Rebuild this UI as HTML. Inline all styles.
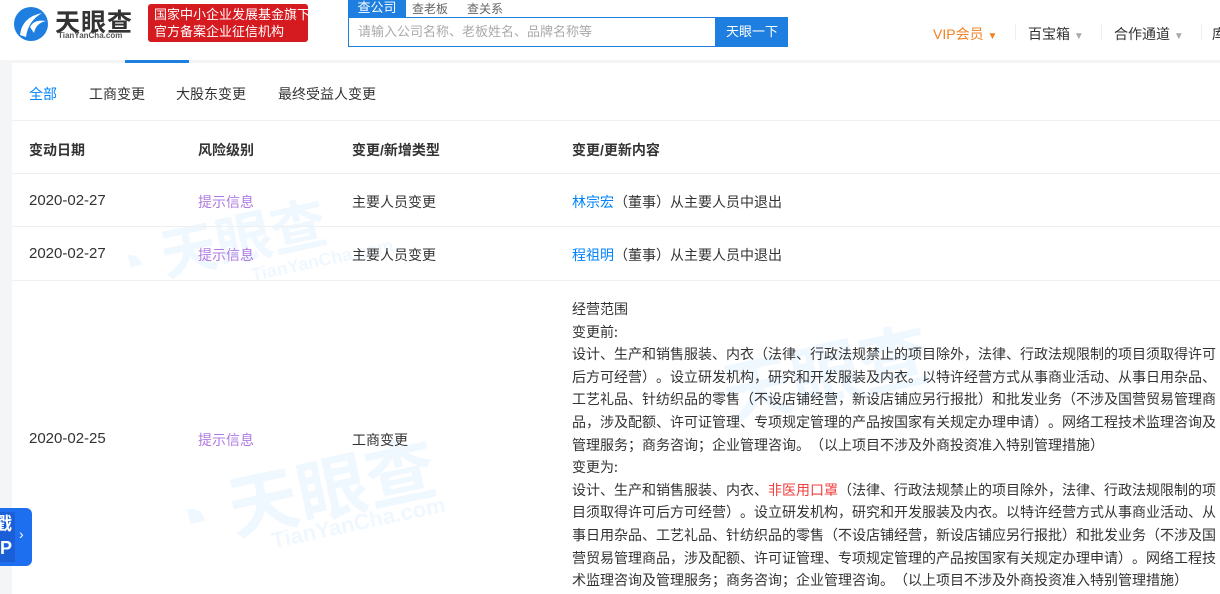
<!DOCTYPE html>
<html><head><meta charset="utf-8"><style>
*{margin:0;padding:0;box-sizing:border-box}
body{width:1220px;height:594px;overflow:hidden;background:#f4f5f7;font-family:"Liberation Sans","Noto Sans CJK SC",sans-serif;color:#333;font-size:14px;position:relative;text-spacing-trim:space-all}
.hdr{position:absolute;left:0;top:0;width:1220px;height:60px;background:#fff}
.main{position:absolute;left:12px;top:63px;width:1208px;height:531px;background:#fff}
.abs{position:absolute;white-space:nowrap}
.line{position:absolute;left:12px;width:1208px;height:1px;background:#eef0f2}
.wm{position:absolute;color:#0084ff;opacity:.06;font-weight:bold;white-space:nowrap;transform:rotate(-12deg)}
.blue{color:#0084ff}
.purple{color:#b07be0}
</style></head><body>
<div class="hdr">
 <svg class="abs" style="left:12px;top:5px" width="38" height="38" viewBox="0 0 38 38"><circle cx="19" cy="19" r="17" fill="#1e7fe0"/><path d="M8 30 Q10 12 30 8 Q16 16 14 32Z" fill="#fff"/><path d="M18 22 Q22 14 34 16 Q24 18 22 28Z" fill="#fff"/></svg>
 <div class="abs" style="left:55px;top:3px;font-size:25px;font-weight:bold;color:#333;letter-spacing:1px">天眼查</div>
 <div class="abs" style="left:58px;top:31px;font-size:8px;font-weight:bold;color:#555">TianYanCha.com</div>
 <div class="abs" style="left:148px;top:4px;width:160px;height:38px;background:#d51a20;border-radius:3px;color:#fff;font-size:13px;line-height:17px;padding:2px 6px">国家中小企业发展基金旗下<br>官方备案企业征信机构</div>
 <div class="abs" style="left:348px;top:0;width:58px;height:17px;background:#1e7fe0;color:#fff;font-size:13px;text-align:center;line-height:16px">查公司</div>
 <div class="abs" style="left:412px;top:0;font-size:12px;color:#666">查老板</div>
 <div class="abs" style="left:467px;top:0;font-size:12px;color:#666">查关系</div>
 <div class="abs" style="left:348px;top:17px;width:368px;height:30px;border:1px solid #1e7fe0;color:#aaa;font-size:13px;line-height:28px;padding-left:9px">请输入公司名称、老板姓名、品牌名称等</div>
 <div class="abs" style="left:716px;top:17px;width:72px;height:30px;background:#1e7fe0;color:#fff;font-size:13px;line-height:30px;text-align:center">天眼一下</div>
 <div class="abs" style="left:933px;top:24px;color:#f08226;font-size:14px">VIP会员 <span style="font-size:10px">▼</span></div>
 <div class="abs" style="left:1015px;top:24px;width:1px;height:16px;background:#eee"></div>
 <div class="abs" style="left:1028px;top:24px;color:#333">百宝箱 <span style="font-size:10px;color:#aaa">▼</span></div>
 <div class="abs" style="left:1101px;top:24px;width:1px;height:16px;background:#eee"></div>
 <div class="abs" style="left:1114px;top:24px;color:#333">合作通道 <span style="font-size:10px;color:#aaa">▼</span></div>
 <div class="abs" style="left:1201px;top:24px;width:1px;height:16px;background:#eee"></div>
 <div class="abs" style="left:1212px;top:24px;color:#333">库</div>
</div>
<div class="abs" style="left:125px;top:60px;width:64px;height:3px;background:#1e7fe0"></div>
<div class="main"></div>
<div class="wm" style="left:110px;top:200px;font-size:56px">◔ 天眼查</div>
<div class="wm" style="left:250px;top:250px;font-size:18px">TianYanCha.com</div>
<div class="wm" style="left:165px;top:440px;font-size:70px">◔ 天眼查</div>
<div class="wm" style="left:270px;top:510px;font-size:22px">TianYanCha.com</div>
<div class="wm" style="left:720px;top:320px;font-size:70px">天眼查</div>
<div class="abs blue" style="left:29px;top:84px">全部</div>
<div class="abs" style="left:89px;top:84px">工商变更</div>
<div class="abs" style="left:176px;top:84px">大股东变更</div>
<div class="abs" style="left:278px;top:84px">最终受益人变更</div>
<div class="line" style="top:120px"></div>
<div class="abs" style="left:29px;top:140px;font-weight:bold">变动日期</div>
<div class="abs" style="left:198px;top:140px;font-weight:bold">风险级别</div>
<div class="abs" style="left:352px;top:140px;font-weight:bold">变更/新增类型</div>
<div class="abs" style="left:572px;top:140px;font-weight:bold">变更/更新内容</div>
<div class="line" style="top:173px"></div>
<div class="abs" style="left:29px;top:192px;font-size:15px">2020-02-27</div>
<div class="abs purple" style="left:198px;top:192px">提示信息</div>
<div class="abs" style="left:352px;top:192px">主要人员变更</div>
<div class="abs" style="left:572px;top:192px"><span class="blue">林宗宏</span>（董事）从主要人员中退出</div>
<div class="line" style="top:226px"></div>
<div class="abs" style="left:29px;top:245px;font-size:15px">2020-02-27</div>
<div class="abs purple" style="left:198px;top:245px">提示信息</div>
<div class="abs" style="left:352px;top:245px">主要人员变更</div>
<div class="abs" style="left:572px;top:245px"><span class="blue">程祖明</span>（董事）从主要人员中退出</div>
<div class="line" style="top:280px"></div>
<div class="abs" style="left:29px;top:430px;font-size:15px">2020-02-25</div>
<div class="abs purple" style="left:198px;top:430px">提示信息</div>
<div class="abs" style="left:352px;top:430px">工商变更</div>
<div class="abs" style="left:572px;top:298px;width:650px;white-space:normal;line-height:22.6px;font-size:14px;overflow:hidden;height:296px;font-family:'Noto Sans CJK SC','Liberation Sans',sans-serif;text-spacing-trim:space-all;line-break:anywhere">经营范围<br>变更前:<br>设计、生产和销售服装、内衣（法律、行政法规禁止的项目除外，法律、行政法规限制的项目须取得许可后方可经营）。设立研发机构，研究和开发服装及内衣。以特许经营方式从事商业活动、从事日用杂品、工艺礼品、针纺织品的零售（不设店铺经营，新设店铺应另行报批）和批发业务（不涉及国营贸易管理商品，涉及配额、许可证管理、专项规定管理的产品按国家有关规定办理申请）。网络工程技术监理咨询及管理服务；商务咨询；企业管理咨询。（以上项目不涉及外商投资准入特别管理措施）<br>变更为:<br>设计、生产和销售服装、内衣、<span style="color:#f04040">非医用口罩</span>（法律、行政法规禁止的项目除外，法律、行政法规限制的项目须取得许可后方可经营）。设立研发机构，研究和开发服装及内衣。以特许经营方式从事商业活动、从事日用杂品、工艺礼品、针纺织品的零售（不设店铺经营，新设店铺应另行报批）和批发业务（不涉及国营贸易管理商品，涉及配额、许可证管理、专项规定管理的产品按国家有关规定办理申请）。网络工程技术监理咨询及管理服务；商务咨询；企业管理咨询。（以上项目不涉及外商投资准入特别管理措施）</div>
<div class="abs" style="left:0;top:508px;width:32px;height:58px;background:#1e6ff0;border-radius:0 6px 6px 0"></div>
<div class="abs" style="left:0;top:512px;width:15px;height:50px;background:#1a5fd8;color:#fff;font-weight:bold;font-size:18px;line-height:24px;overflow:hidden;text-indent:-6px">戳<br>P</div>
<div class="abs" style="left:19px;top:526px;color:#fff;font-size:14px">›</div>
</body></html>
